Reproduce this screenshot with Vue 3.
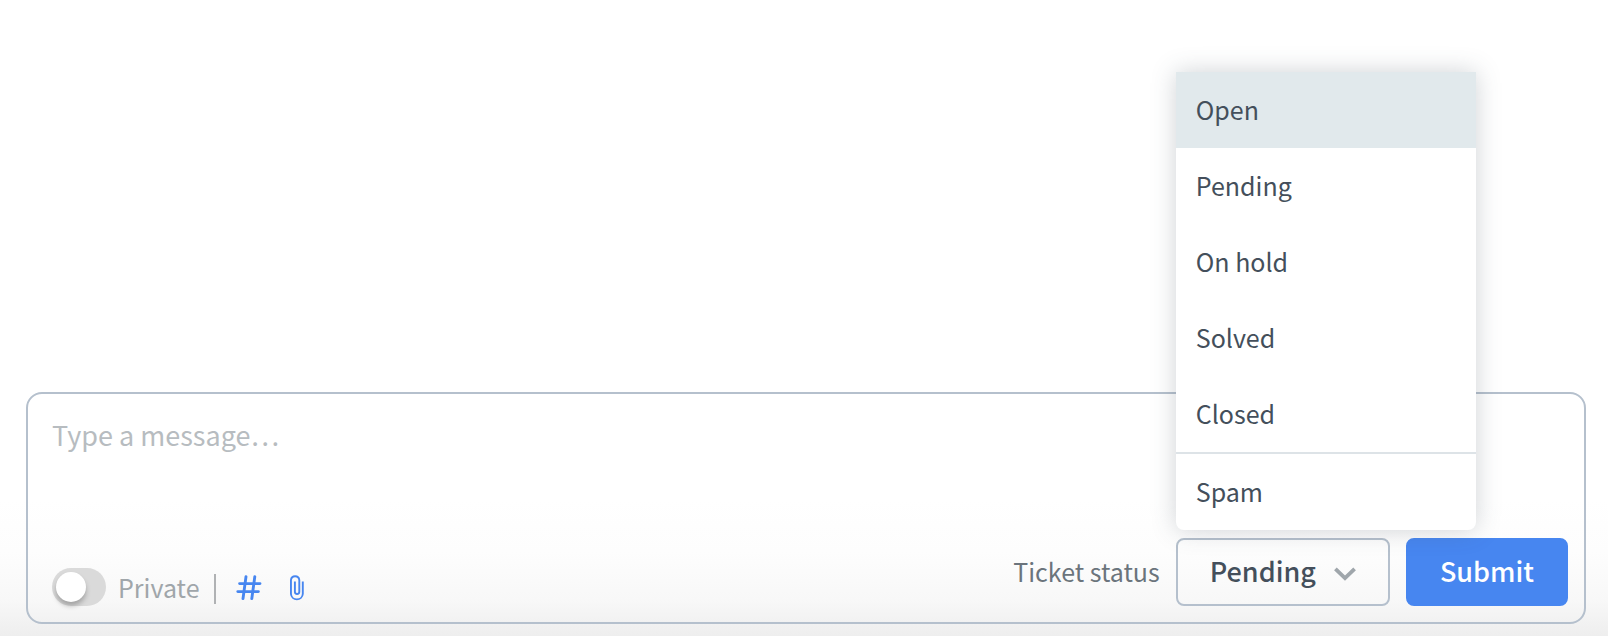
<script setup>
import { ref } from 'vue'

const statuses = ['Open', 'Pending', 'On hold', 'Solved', 'Closed', 'Spam']
const status = ref('Pending')
const highlighted = ref('Open')
const menuOpen = ref(true)
const isPrivate = ref(false)
const message = ref('')

function choose(name) {
  status.value = name
  menuOpen.value = false
}
</script>

<template>
  <main class="page">
    <form class="composer" @submit.prevent>
      <textarea
        v-model="message"
        class="message"
        aria-label="Message"
        placeholder="Type a message…"
      ></textarea>
      <div class="toolbar">
        <div class="tools">
          <label class="private">
            <input v-model="isPrivate" type="checkbox" class="switch" />
            <span>Private</span>
          </label>
          <span class="separator"></span>
          <button type="button" class="tool" aria-label="Insert canned response">
            <svg width="26" height="28" viewBox="0 0 26 28" fill="none" stroke="currentColor" stroke-width="2.9" stroke-linecap="round">
              <path d="M10 3.6L7 25.6M18.8 3.6L15.8 25.6M3.6 10.6H24M1.8 18.6H22.4" />
            </svg>
          </button>
          <button type="button" class="tool" aria-label="Attach file">
            <svg width="14" height="28" viewBox="0 0 14 28" fill="none" stroke="currentColor" stroke-width="1.9">
              <path d="M12.8 8.4V21A5.95 5.95 0 0 1 .95 21V7A4.2 4.2 0 0 1 9.3 7V18.8A2.2 2.2 0 0 1 4.9 18.8V8.4" />
            </svg>
          </button>
        </div>
        <div class="actions">
          <span id="status-label" class="status-label">Ticket status</span>
          <div class="status">
            <button
              id="status-button"
              type="button"
              class="status-button"
              aria-haspopup="listbox"
              aria-labelledby="status-label status-button"
              :aria-expanded="menuOpen"
              @click="menuOpen = !menuOpen"
            >
              <span>{{ status }}</span>
              <svg width="22" height="20" viewBox="0 0 22 20" fill="none" stroke="#9fa6ab" stroke-width="3.8">
                <path d="M1.4 7.8L11 17.2L20.6 7.8" />
              </svg>
            </button>
            <ul v-if="menuOpen" class="menu" role="listbox" aria-labelledby="status-label">
              <li
                v-for="name in statuses"
                :key="name"
                class="option"
                :class="{ highlighted: name === highlighted, divided: name === 'Spam' }"
                role="option"
                :aria-selected="name === status"
                @mouseenter="highlighted = name"
                @click="choose(name)"
              >
                {{ name }}
              </li>
            </ul>
          </div>
          <button type="submit" class="submit">Submit</button>
        </div>
      </div>
    </form>
  </main>
</template>

<style>
body {
  margin: 0;
  background: #fff;
}
</style>

<style scoped>
.page,
.page * {
  box-sizing: border-box;
}

.page {
  display: flex;
  flex-direction: column;
  justify-content: flex-end;
  min-height: 100vh;
  padding: 0 22px 12px 26px;
  background: linear-gradient(to top, #eeeeee 0, #f8f8f8 36px, #fdfdfd 84px, #fff 136px);
  font-family: "Noto Sans CJK SC", "Open Sans", sans-serif;
  font-size: 25px;
  line-height: 36px;
  color: #444f5b;
}

button,
textarea {
  font: inherit;
}

.composer {
  display: flex;
  flex-direction: column;
  border: 2px solid #b5c0cd;
  border-radius: 16px;
  padding: 23px 16px 16px 24px;
}

.message {
  width: 100%;
  height: 105px;
  margin-bottom: 16px;
  padding: 0;
  border: 0;
  outline: 0;
  resize: none;
  background: transparent;
  color: #444f5b;
  font-size: 27px;
}

.message::placeholder {
  color: #b7bcc0;
  opacity: 1;
}

.toolbar {
  display: flex;
  justify-content: space-between;
  align-items: flex-end;
}

.tools,
.private,
.actions {
  display: flex;
  align-items: center;
}

.private {
  gap: 12px;
  color: #a0a6aa;
}

.switch {
  appearance: none;
  display: flex;
  width: 54px;
  height: 38px;
  margin: 0;
  padding: 4px;
  border-radius: 19px;
  background: #dadada;
}

.switch::before {
  content: "";
  width: 30px;
  height: 30px;
  border-radius: 50%;
  background: #fff;
  box-shadow: 0 4px 5px rgba(0, 0, 0, 0.25);
}

.switch:checked {
  justify-content: flex-end;
  background: #4786f0;
}

.separator {
  width: 2px;
  height: 30px;
  margin: 4px 20px 0 15px;
  background: #b0b2b4;
}

.tool {
  display: flex;
  margin-right: 28px;
  padding: 0;
  border: 0;
  background: none;
  color: #4786f0;
}

.actions {
  gap: 16px;
}

.status-label {
  padding-bottom: 2px;
  color: #6b747c;
}

.status {
  position: relative;
}

.status-button,
.submit {
  display: flex;
  align-items: center;
  justify-content: center;
  height: 68px;
  padding: 0 32px 2px;
  border: 2px solid #b5c0cd;
  border-radius: 8px;
  background: transparent;
  color: #444f5b;
  font-size: 27px;
  font-weight: 500;
}

.status-button {
  gap: 18px;
}

.submit {
  border-color: #4786f0;
  background: #4786f0;
  color: #fff;
}

.menu {
  position: absolute;
  bottom: calc(100% + 8px);
  left: 0;
  width: 300px;
  margin: 0;
  padding: 0;
  list-style: none;
  overflow: hidden;
  border-radius: 0 0 8px 8px;
  background: #fff;
  box-shadow: 0 0 24px rgba(68, 79, 91, 0.25);
}

.option {
  padding: 19px 20px 21px;
}

.highlighted {
  background: #e1e9ec;
}

.divided {
  border-top: 2px solid #dde3e7;
}
</style>
